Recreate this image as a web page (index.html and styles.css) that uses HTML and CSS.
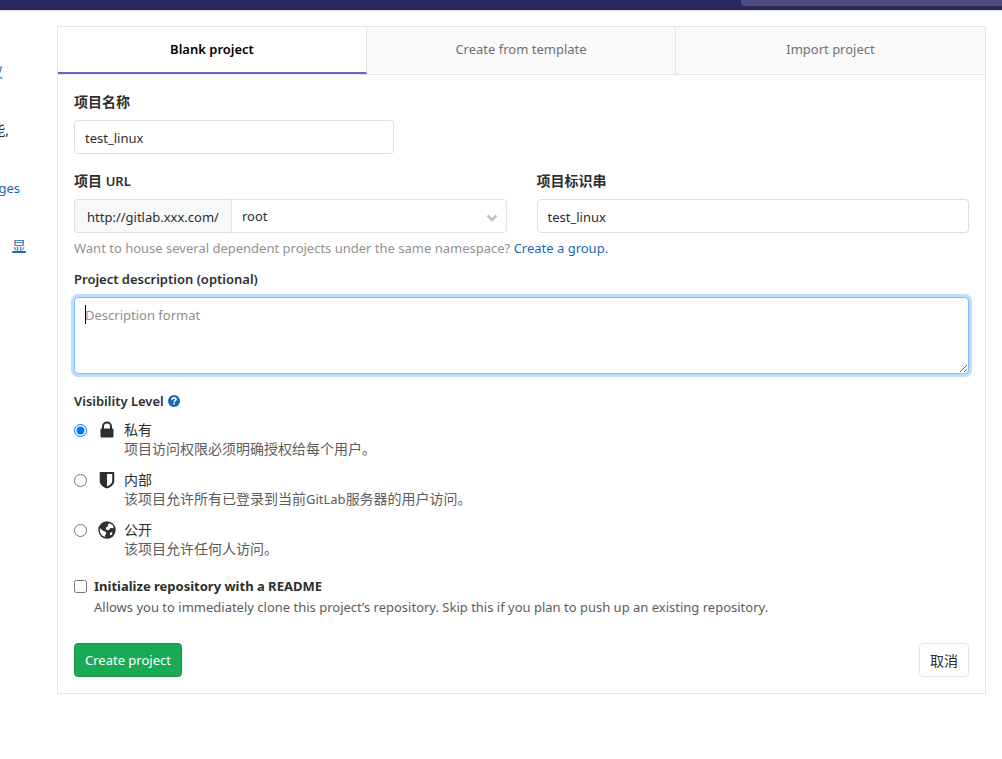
FILE: index.html
```html
<!DOCTYPE html>
<html lang="zh-CN">
<head>
<meta charset="utf-8">
<title>New Project</title>
<link rel="stylesheet" href="styles.css">
</head>
<body>
<header class="navbar"><div class="navbar-search"></div></header>
<div class="layout">
  <aside class="sidebar">
    <p class="side-line side-line-a"><a href="#" class="link cjk">议</a></p>
    <p class="side-line side-line-b cjk">能,</p>
    <p class="side-line side-line-c"><a href="#" class="link">ges</a></p>
    <p class="side-line side-line-d"><a href="#" class="link underlined cjk">显</a></p>
  </aside>
  <main class="panel">
    <nav class="tabs">
      <a href="#" class="tab active">Blank project</a>
      <a href="#" class="tab">Create from template</a>
      <a href="#" class="tab">Import project</a>
    </nav>
    <form class="form">
      <div class="field field-name">
        <label class="label cjk" for="name">项目名称</label>
        <input class="control" id="name" type="text" value="test_linux">
      </div>
      <div class="columns">
        <div class="field">
          <label class="label cjk" for="namespace">项目 <span class="latin">URL</span></label>
          <div class="input-group">
            <span class="addon">http://gitlab.xxx.com/</span>
            <div class="select-wrap">
              <select class="control select" id="namespace"><option>root</option></select>
              <svg class="chevron" viewBox="0 0 12 8"><path d="M1.500 1.500 6 6l4.500-4.500" fill="none" stroke="#bfbfbf" stroke-width="2.600"/></svg>
            </div>
          </div>
        </div>
        <div class="field">
          <label class="label cjk" for="slug">项目标识串</label>
          <input class="control" id="slug" type="text" value="test_linux">
        </div>
      </div>
      <p class="help">Want to house several dependent projects under the same namespace? <a href="#" class="link">Create a group.</a></p>
      <div class="field description">
        <label class="label" for="description">Project description (optional)</label>
        <div class="textarea-wrap">
          <textarea class="control textarea" id="description" placeholder="Description format"></textarea>
          <span class="caret"></span>
        </div>
      </div>
      <div class="visibility-label label">Visibility Level
        <a href="#" class="help-link" aria-label="Help"><svg class="help-icon" viewBox="0 0 12 12"><circle cx="6" cy="6" r="6" fill="#1b69b6"/><path d="M4 4.700C4 3.500 4.900 2.900 6 2.900s2 .7 2 1.700c0 1.300-1.900 1.300-1.900 2.600" fill="none" stroke="#fff" stroke-width="1.600"/><path d="M5.200 8h1.700v1.600H5.200z" fill="#fff"/></svg></a>
      </div>
      <div class="options">
        <div class="option">
          <input class="choice" type="radio" name="visibility" id="private" checked>
          <svg class="icon" viewBox="0 0 18 18"><path d="M5 8V5.500a4 4 0 0 1 8 0V8" fill="none" stroke="#2e2e2e" stroke-width="2"/><rect x="2.500" y="7.500" width="13" height="9" rx="1" fill="#2e2e2e"/></svg>
          <label for="private" class="option-text cjk"><span class="option-title">私有</span><span class="option-note">项目访问权限必须明确授权给每个用户。</span></label>
        </div>
        <div class="option">
          <input class="choice" type="radio" name="visibility" id="internal">
          <svg class="icon" viewBox="0 0 18 18"><path fill-rule="evenodd" d="M2.500 1h13q.8 0 .8.800V10c0 4-4 6.300-7.300 7.600C5.700 16.300 1.700 14 1.700 10V1.800q0-.8.800-.8zM9 3v12.400c2.500-1.200 5.200-3 5.200-5.400V3z" fill="#2e2e2e"/></svg>
          <label for="internal" class="option-text cjk"><span class="option-title">内部</span><span class="option-note">该项目允许所有已登录到当前<span class="latin">GitLab</span>服务器的用户访问。</span></label>
        </div>
        <div class="option">
          <input class="choice" type="radio" name="visibility" id="public">
          <svg class="icon" viewBox="0 0 18 18"><circle cx="9" cy="9" r="8.700" fill="#2e2e2e"/><path d="M11.500 2.300 9.800 3.500 10.300 5 8.300 6.300 7.600 8.200 9.300 9.300 11.200 8.800 12.200 7 14.800 7.300 15.800 6.200 14.600 4z" fill="#fff"/><path d="M1.900 7 4.600 9.600 7.600 10.800 8.400 12.400 7 14 7.200 16 4 14.400 2 11.500z" fill="#fff"/><path d="M12 11.500 14.500 11.300 14 13.500 12 14.500z" fill="#fff"/></svg>
          <label for="public" class="option-text cjk"><span class="option-title">公开</span><span class="option-note">该项目允许任何人访问。</span></label>
        </div>
      </div>
      <div class="readme">
        <input class="choice" type="checkbox" id="readme">
        <label for="readme" class="readme-text"><strong class="readme-title">Initialize repository with a README</strong><span class="option-note">Allows you to immediately clone this project’s repository. Skip this if you plan to push up an existing repository.</span></label>
      </div>
      <div class="actions">
        <button type="button" class="button primary">Create project</button>
        <button type="button" class="button cjk">取消</button>
      </div>
    </form>
  </main>
</div>
</body>
</html>
```
FILE: styles.css
```css
* { box-sizing: border-box; }

body {
  margin: 0;
  background: #fff;
  color: #2e2e2e;
  font: 13px/20px "Noto Sans", "Open Sans", "Noto Sans CJK SC", sans-serif;
}

.cjk { font-family: "Noto Sans", "Noto Sans CJK SC", sans-serif; font-size: 14px; }
.latin { font-size: 13px; }
.link { color: #1b69b6; text-decoration: none; }
.underlined { text-decoration: underline; }

.navbar {
  display: flex;
  justify-content: flex-end;
  height: 11px;
  background: #292961;
  border-bottom: 1px solid #e5e5e5;
}
.navbar-search {
  width: 26%;
  height: 6px;
  background: #4c4b7c;
  border-bottom-left-radius: 4px;
}

.layout { display: flex; padding: 15px 16px 0 0; }

.sidebar {
  flex: 0 0 57px;
  overflow: hidden;
  padding-top: 36px;
}
.side-line {
  display: flex;
  justify-content: flex-end;
  margin: 0 0 38px;
  line-height: 20px;
}
.side-line-a { padding-right: 54px; }
.side-line-b { padding-right: 48px; }
.side-line-c { padding-right: 37px; }
.side-line-d { padding-right: 31px; }

.panel { flex: 1; min-width: 0; border: 1px solid #e5e5e5; }

.tabs {
  display: grid;
  grid-template-columns: repeat(3, 1fr);
  border-bottom: 1px solid #e5e5e5;
}
.tab {
  height: 47px;
  padding-top: 12px;
  background: #fafafa;
  border-right: 1px solid #e5e5e5;
  color: #707070;
  text-align: center;
  text-decoration: none;
}
.tab:last-child { border-right: 0; }
.tab.active {
  background: #fff;
  border-bottom: 2px solid #6666c4;
  color: #000;
  font-weight: 600;
}

.form { padding: 17px 16px 16px; }
.label { display: block; margin-bottom: 8px; line-height: 20px; font-weight: 600; }

.control {
  display: block;
  width: 100%;
  height: 34px;
  margin: 0;
  padding: 7px 10px 5px;
  background: #fff;
  border: 1px solid #dfdfdf;
  border-radius: 4px;
  color: #2e2e2e;
  font: inherit;
}

.field-name { width: 320px; margin-bottom: 17px; }
.columns { display: grid; grid-template-columns: 1fr 1fr; gap: 30px; }

.input-group { display: flex; }
.addon {
  flex: 0 0 158px;
  padding: 7px 0 5px 12px;
  background: #f7f8fa;
  border: 1px solid #dfdfdf;
  border-right-color: #e5e5e5;
  border-radius: 4px 0 0 4px;
}
.select-wrap { position: relative; flex: 1; }
.select {
  appearance: none;
  padding: 6px 10px;
  border-color: #e5e5e5;
  border-left: 0;
  border-radius: 0 4px 4px 0;
}
.chevron {
  position: absolute;
  top: 15px;
  right: 9px;
  width: 12px;
  height: 8px;
  pointer-events: none;
}

.help { margin: 5px 0 11px; color: #919191; }

.description { margin-bottom: 17px; }
.textarea-wrap { position: relative; }
.textarea {
  height: 77px;
  padding: 7px 10px;
  border-color: #80bdff;
  box-shadow: 0 0 0 3px #bfdeff;
  outline: 0;
  resize: vertical;
}
.textarea::placeholder { color: #919191; }
.caret {
  position: absolute;
  top: 8px;
  left: 11px;
  width: 1px;
  height: 19px;
  background: #000;
}

.visibility-label { display: flex; align-items: center; gap: 4px; margin-bottom: 9px; }
.help-link { display: flex; }
.help-icon { width: 12px; height: 12px; }

.options { display: grid; gap: 12px; }
.option { display: flex; align-items: flex-start; }
.choice { flex: none; width: 13px; height: 13px; margin: 4px 0 0; }
.icon { flex: none; width: 18px; height: 18px; margin: 1px 8px 0 11px; }
.option-text { display: grid; }
.option-title { line-height: 20px; }
.option-note { color: #5c5c5c; line-height: 18px; }

.readme { display: flex; margin-top: 18px; }
.readme-text { display: grid; gap: 2px; margin-left: 7px; }
.readme-title { line-height: 20px; font-weight: 700; }

.actions { display: flex; justify-content: space-between; margin-top: 27px; }
.button {
  height: 34px;
  padding: 0 10px;
  background: #fff;
  border: 1px solid #e5e5e5;
  border-radius: 4px;
  color: #2e2e2e;
  font-family: "Noto Sans", "Noto Sans CJK SC", sans-serif;
}
.primary { background: #1aaa55; border-color: #168f48; color: #fff; font-size: 13px; }
```
